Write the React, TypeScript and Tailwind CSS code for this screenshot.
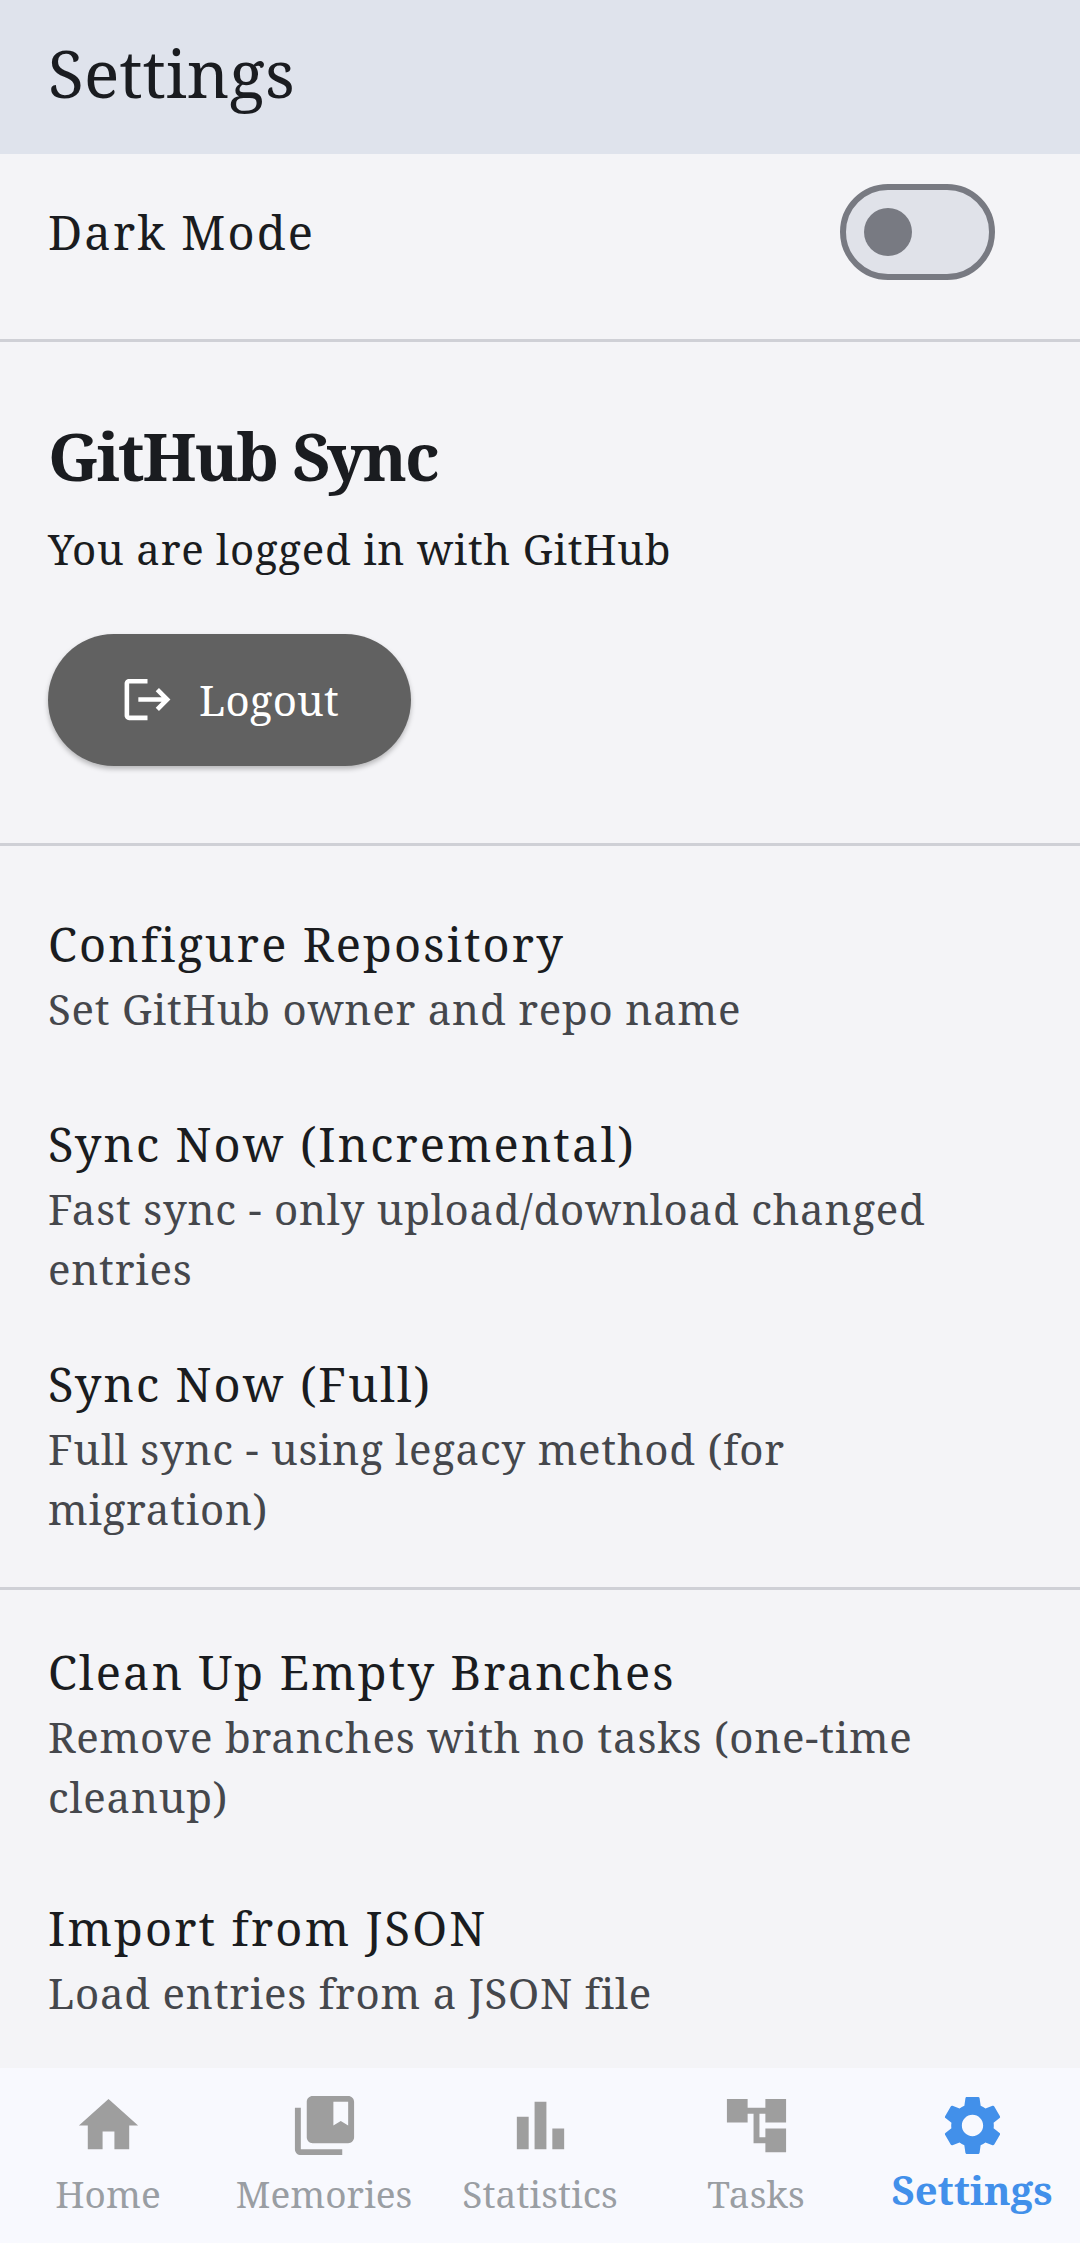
import React from 'react';
import { MdHome, MdCollectionsBookmark, MdBarChart, MdAccountTree, MdSettings, MdLogout } from 'react-icons/md';

const SettingsTile: React.FC<{ title: string; subtitle: string; className: string }> = ({ title, subtitle, className }) => (
  <div className={`px-[48px] ${className}`}>
    <p className="text-[47px] leading-[70px] tracking-[2.15px] text-[#1a1c20]">{title}</p>
    <p className="max-w-[900px] text-[42px] leading-[60px] tracking-[0.77px] text-[#45474c]">{subtitle}</p>
  </div>
);

const navItems = [
  { label: 'Home', icon: MdHome },
  { label: 'Memories', icon: MdCollectionsBookmark },
  { label: 'Statistics', icon: MdBarChart },
  { label: 'Tasks', icon: MdAccountTree },
];

const App: React.FC = () => {
  return (
    <div className="flex h-[2243px] w-[1080px] flex-col overflow-hidden bg-[#f4f4f7] font-['Noto_Serif','DejaVu_Serif',serif]">
      {/* Header */}
      <div className="flex h-[154px] shrink-0 items-center bg-[#dfe3ec] px-[48px] pb-[10px]">
        <h1 className="text-[66px] text-[#1a1c20]">Settings</h1>
      </div>

      <div className="flex-1 overflow-hidden">
        {/* Dark mode */}
        <div className="flex h-[156px] items-center justify-between pl-[48px] pr-[85px]">
          <span className="text-[47px] tracking-[2.15px] text-[#1a1c20]">Dark Mode</span>
          <div className="flex h-[96px] w-[155px] items-center rounded-full border-[6px] border-[#787a82] bg-[#e0e2e9] pl-[18px]">
            <div className="h-[48px] w-[48px] rounded-full bg-[#787a82]" />
          </div>
        </div>
        <div className="mt-[29px] h-[3px] bg-[#cfd0d6]" />

        {/* GitHub section */}
        <div className="px-[48px] pt-[73px]">
          <h2 className="text-[66px] font-bold leading-[80px] tracking-[-2.1px] text-[#1a1c20]">GitHub Sync</h2>
          <p className="mt-[24px] text-[42px] leading-[60px] tracking-[0.77px] text-[#1a1c20]">You are logged in with GitHub</p>
          <button className="mt-[55px] flex h-[132px] w-[363px] items-center justify-center gap-[24px] rounded-full bg-[#616161] pb-[2px] text-white shadow-[0_3px_5px_rgba(0,0,0,0.25)]">
            <MdLogout className="h-[55px] w-[55px]" />
            <span className="text-[42px] tracking-[0.2px]">Logout</span>
          </button>
        </div>
        <div className="mt-[77px] h-[3px] bg-[#cfd0d6]" />

        {/* Sync tiles */}
        <SettingsTile className="pt-[63px]" title="Configure Repository" subtitle="Set GitHub owner and repo name" />
        <SettingsTile className="pt-[70px]" title="Sync Now (Incremental)" subtitle="Fast sync - only upload/download changed entries" />
        <SettingsTile className="pt-[50px]" title="Sync Now (Full)" subtitle="Full sync - using legacy method (for migration)" />
        <div className="mt-[48px] h-[3px] bg-[#cfd0d6]" />

        {/* Maintenance tiles */}
        <SettingsTile className="pt-[47px]" title="Clean Up Empty Branches" subtitle="Remove branches with no tasks (one-time cleanup)" />
        <SettingsTile className="pt-[66px]" title="Import from JSON" subtitle="Load entries from a JSON file" />
      </div>

      {/* Bottom nav */}
      <nav className="grid h-[175px] shrink-0 grid-cols-5 bg-[#f8f9fe]">
        {navItems.map(({ label, icon: Icon }) => (
          <div key={label} className="flex flex-col items-center pt-[22px]">
            <Icon className="h-[71px] w-[71px] text-[#9e9e9e]" />
            <span className="mt-[8px] text-[37px] leading-[50px] text-[#9a9ea3]">{label}</span>
          </div>
        ))}
        <div className="flex flex-col items-center pt-[22px]">
          <MdSettings className="h-[71px] w-[71px] text-[#4290ea]" />
          <span className="mt-[4px] text-[40px] font-bold leading-[50px] text-[#4290ea]">Settings</span>
        </div>
      </nav>
    </div>
  );
};

export default App;
